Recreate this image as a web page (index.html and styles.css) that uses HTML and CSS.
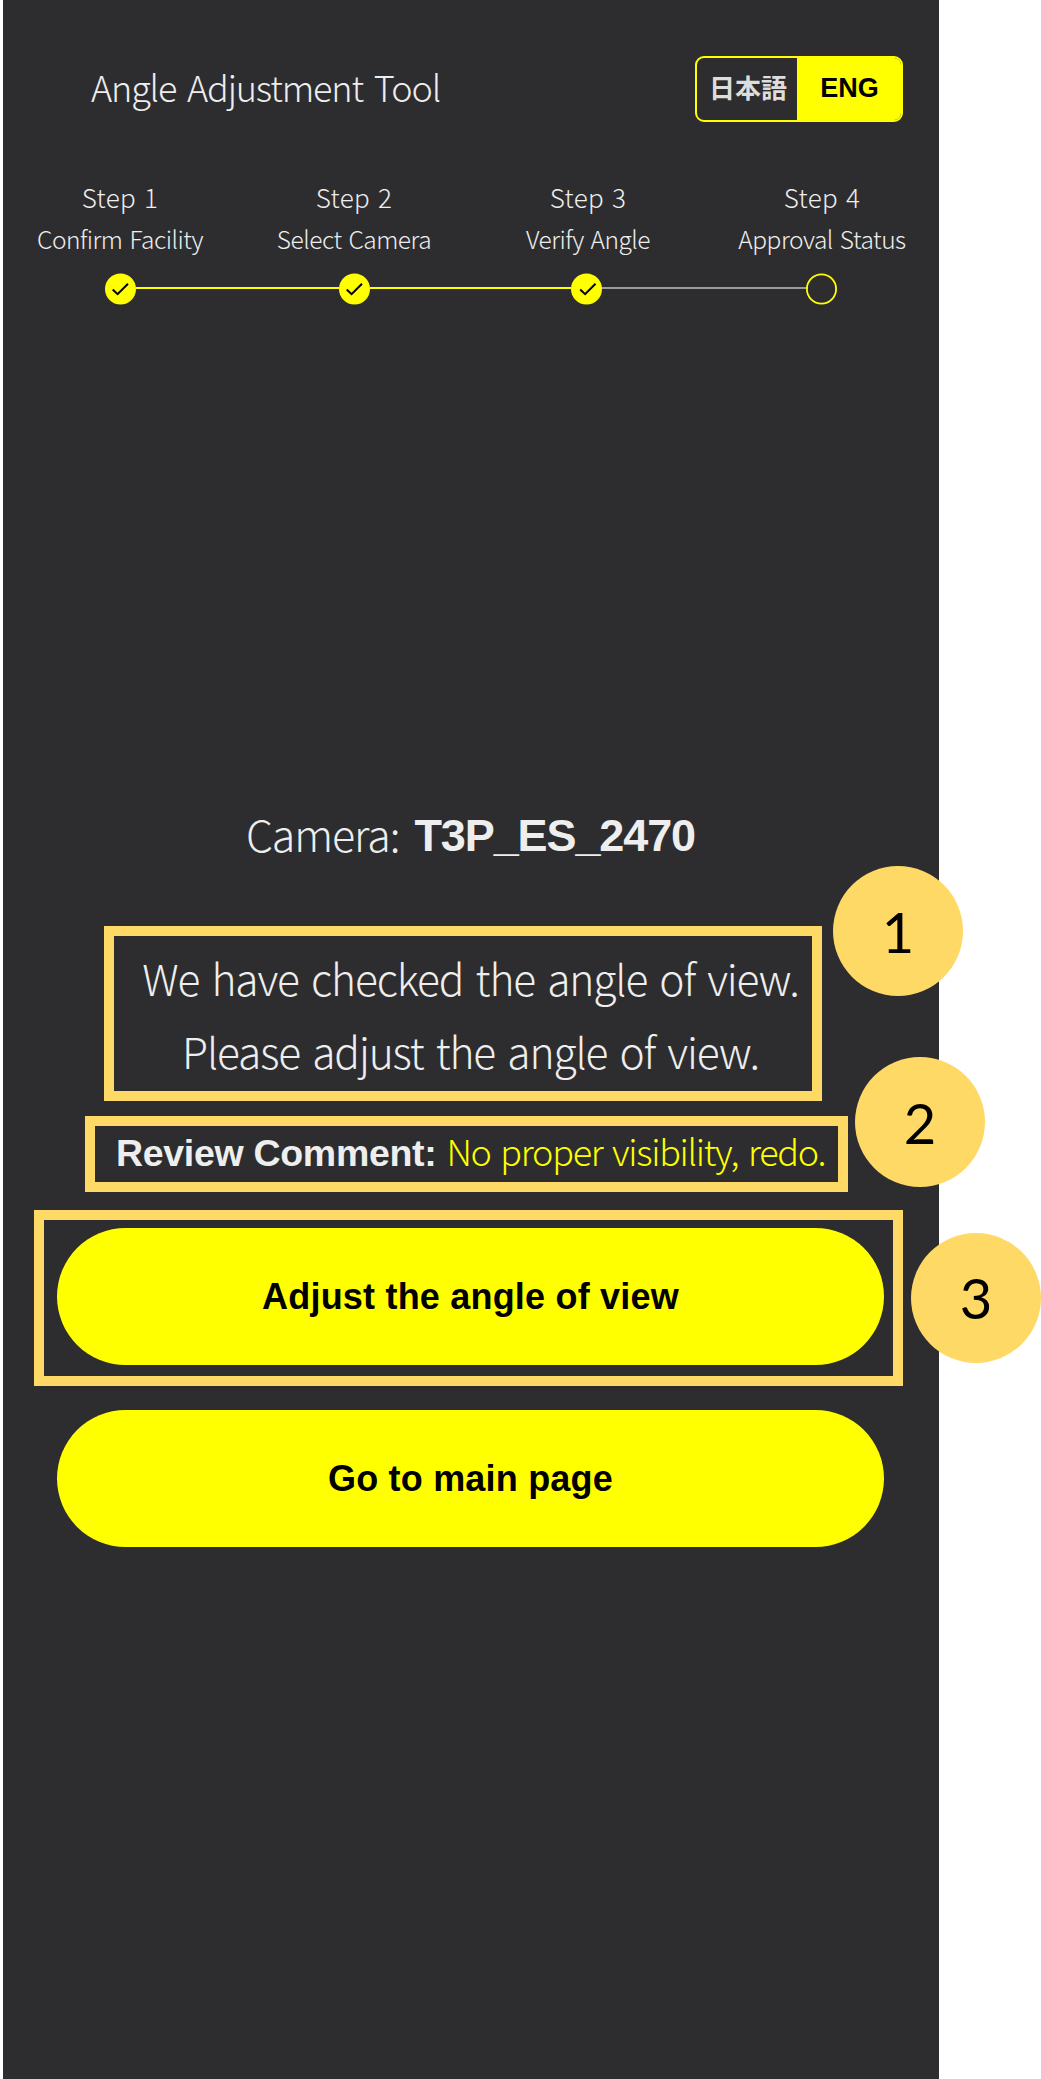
FILE: index.html
```html
<!DOCTYPE html>
<html lang="en">
<head>
<meta charset="utf-8">
<title>Angle Adjustment Tool</title>
<link rel="stylesheet" href="styles.css">
</head>
<body>
<div class="phone">
  <header class="header">
    <h1 class="title">Angle Adjustment Tool</h1>
    <div class="lang">
      <button class="lang-option lang-ja" lang="ja">日本語</button>
      <button class="lang-option lang-active">ENG</button>
    </div>
  </header>

  <section class="steps">
    <div class="step"><span class="step-number">Step 1</span><span class="step-name">Confirm Facility</span></div>
    <div class="step"><span class="step-number">Step 2</span><span class="step-name">Select Camera</span></div>
    <div class="step"><span class="step-number">Step 3</span><span class="step-name">Verify Angle</span></div>
    <div class="step"><span class="step-number">Step 4</span><span class="step-name">Approval Status</span></div>
  </section>
  <div class="track">
    <svg class="dot" viewBox="0 0 31 31"><circle cx="15.5" cy="15.5" r="15.5" fill="#ff0"/><path d="M7.7 16 12.6 20.7 23 10.2" fill="none" stroke="#000" stroke-width="2"/></svg>
    <span class="line line-first"></span>
    <svg class="dot" viewBox="0 0 31 31"><circle cx="15.5" cy="15.5" r="15.5" fill="#ff0"/><path d="M7.7 16 12.6 20.7 23 10.2" fill="none" stroke="#000" stroke-width="2"/></svg>
    <span class="line line-second"></span>
    <svg class="dot" viewBox="0 0 31 31"><circle cx="15.5" cy="15.5" r="15.5" fill="#ff0"/><path d="M9.2 16 14.1 20.7 24.5 10.2" fill="none" stroke="#000" stroke-width="2"/></svg>
    <span class="line line-pending"></span>
    <svg class="dot" viewBox="0 0 31 31"><circle cx="15.5" cy="15.5" r="14.6" fill="none" stroke="#ff0" stroke-width="1.8"/></svg>
  </div>

  <main class="content">
    <p class="camera"><span class="camera-label">Camera:</span><strong class="camera-id">T3P_ES_2470</strong></p>
    <p class="message"><span>We have checked the angle of view.</span><span>Please adjust the angle of view.</span></p>
    <p class="review"><strong class="review-label">Review Comment:</strong><span class="review-text">No proper visibility, redo.</span></p>
    <button class="action">Adjust the angle of view</button>
    <button class="action">Go to main page</button>
  </main>
</div>

<div class="frame frame-message"></div>
<div class="frame frame-review"></div>
<div class="frame frame-action"></div>
<div class="callout callout-1">1</div>
<div class="callout callout-2">2</div>
<div class="callout callout-3">3</div>
</body>
</html>
```
FILE: styles.css
```css
* {
  box-sizing: border-box;
}

body {
  margin: 0;
  position: relative;
  min-height: 2079px;
  background: #fff;
  font-family: "Noto Sans CJK JP", "Noto Sans", sans-serif;
  font-weight: 300;
  color: #eee;
}

h1, p {
  margin: 0;
  font-weight: 300;
}

button {
  border: 0;
  padding: 0;
  background: none;
  color: inherit;
  font: inherit;
}

.phone {
  width: 936px;
  height: 2079px;
  margin-left: 3px;
  background: #2d2d2f;
}

/* Header */
.header {
  display: flex;
  justify-content: space-between;
  align-items: flex-start;
  height: 122px;
  padding: 56px 36px 0 88px;
}

.title {
  font-size: 36px;
  line-height: 61px;
  letter-spacing: -1.15px;
  word-spacing: 4px;
}

.lang {
  display: flex;
  width: 208px;
  height: 66px;
  border: 2px solid #ff0;
  border-radius: 9px;
  overflow: hidden;
}

.lang-option {
  flex: 1;
  padding-bottom: 5px;
  font-size: 26px;
  font-weight: 700;
  line-height: 57px;
}

.lang-ja {
  flex: 0 0 100px;
  padding-left: 2px;
  color: #ddd;
}

.lang-active {
  padding: 1px 0 2px 1px;
  background: #ff0;
  color: #000;
  font-family: "Liberation Sans", Arial, sans-serif;
  font-size: 27px;
}

/* Progress steps */
.steps {
  display: grid;
  grid-template-columns: repeat(4, 1fr);
  margin-top: 54px;
  text-align: center;
}

.step {
  display: flex;
  flex-direction: column;
  line-height: 41px;
  white-space: nowrap;
}

.step-number {
  font-size: 26px;
  letter-spacing: 0.3px;
  word-spacing: 2px;
}

.step-name {
  padding-top: 1px;
  font-size: 24.5px;
  letter-spacing: -0.5px;
  word-spacing: 2px;
}

.track {
  display: flex;
  align-items: center;
  margin-top: 14px;
  padding: 0 102px 0 101.5px;
}

.dot {
  width: 31px;
  height: 32px;
}

.line {
  flex: 1;
  height: 2px;
  margin-bottom: 2px;
  background: #ff0;
}

.line-first {
  flex: 0 0 203px;
}

.line-second {
  flex: 0 0 201.5px;
}

.line-pending {
  margin-right: -2px;
  background: #9b9b9f;
}

/* Main content */
.content {
  display: flex;
  flex-direction: column;
  align-items: center;
  padding: 498px 1px 0 0;
}

.camera {
  display: flex;
  gap: 15px;
  height: 62px;
  font-size: 43px;
  line-height: 60px;
}

.camera-label {
  letter-spacing: -1.1px;
}

.camera-id {
  padding-top: 3px;
  font-family: "Liberation Sans", Arial, sans-serif;
  font-size: 45px;
  font-weight: 700;
  letter-spacing: -1.1px;
}

.message {
  display: flex;
  flex-direction: column;
  margin-top: 76px;
  font-size: 42.5px;
  line-height: 73px;
  letter-spacing: -1.15px;
  word-spacing: 4px;
  text-align: center;
}

.review {
  display: flex;
  gap: 10px;
  height: 63px;
  margin-top: 33px;
  font-size: 36px;
  line-height: 61px;
}

.review-label {
  padding-top: 3px;
  font-family: "Liberation Sans", Arial, sans-serif;
  font-size: 37.5px;
  font-weight: 700;
  letter-spacing: -0.3px;
}

.review-text {
  color: #ff0;
  letter-spacing: -1.3px;
  word-spacing: 3px;
}

.action {
  width: 827px;
  height: 137px;
  margin-top: 45px;
  border-radius: 69px;
  background: #ff0;
  color: #000;
  font: 700 36px "Liberation Sans", Arial, sans-serif;
  letter-spacing: 0.2px;
}

/* Annotation overlays */
.frame {
  position: absolute;
  border: 10px solid #ffd966;
}

.frame-message {
  left: 104px;
  top: 926px;
  width: 718px;
  height: 175px;
}

.frame-review {
  left: 85px;
  top: 1116px;
  width: 763px;
  height: 76px;
}

.frame-action {
  left: 34px;
  top: 1210px;
  width: 869px;
  height: 176px;
}

.callout {
  position: absolute;
  width: 130px;
  height: 130px;
  border-radius: 50%;
  background: #ffd966;
  color: #000;
  font: 400 56px/132px Lato, sans-serif;
  text-align: center;
}

.callout-1 {
  left: 833px;
  top: 866px;
}

.callout-2 {
  left: 855px;
  top: 1057px;
}

.callout-3 {
  left: 911px;
  top: 1233px;
  line-height: 130px;
}
```
